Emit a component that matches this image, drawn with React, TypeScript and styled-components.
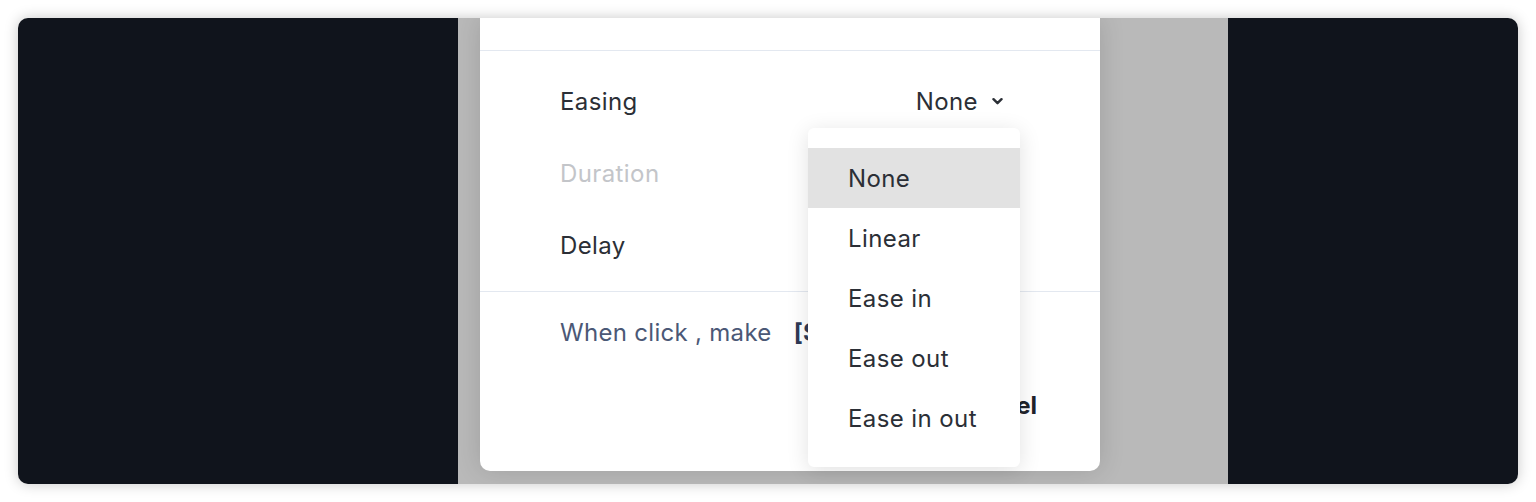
import React from "react";
import styled, { createGlobalStyle } from "styled-components";

// Opções do menu de easing
const easingOptions = ["None", "Linear", "Ease in", "Ease out", "Ease in out"];

interface SettingRow {
  label: string;
  disabled?: boolean;
}

const rows: SettingRow[] = [
  { label: "Easing" },
  { label: "Duration", disabled: true },
  { label: "Delay" },
];

const Chevron: React.FC = () => (
  <svg width="11" height="8" viewBox="0 0 11 8" fill="none">
    <path
      d="M1.5 2.2 L5.5 6.2 L9.5 2.2"
      stroke="#2b2f36"
      strokeWidth="2.4"
      strokeLinecap="round"
      strokeLinejoin="round"
    />
  </svg>
);

const App: React.FC = () => {
  const selected = "None";

  return (
    <>
      <GlobalStyle />
      <Frame>
        <Stage>
          <Modal>
            <Header />

            <Settings>
              {rows.map((row) => (
                <Row key={row.label}>
                  <Label disabled={row.disabled}>{row.label}</Label>
                  {row.label === "Easing" && (
                    <ValueWrap>
                      <Value>
                        {selected}
                        <Chevron />
                      </Value>
                      <Menu>
                        {easingOptions.map((opt) => (
                          <MenuItem key={opt} active={opt === selected}>
                            {opt}
                          </MenuItem>
                        ))}
                      </Menu>
                    </ValueWrap>
                  )}
                </Row>
              ))}
            </Settings>

            <Sentence>
              When click , make <strong>[Select]</strong>
            </Sentence>

            <Footer>
              <CancelButton>Cancel</CancelButton>
            </Footer>
          </Modal>
        </Stage>
      </Frame>
    </>
  );
};

const GlobalStyle = createGlobalStyle`
  html, body {
    margin: 0;
    padding: 0;
    background: #ffffff;
  }
  body {
    font-family: Inter, "Liberation Sans", sans-serif;
    -webkit-font-smoothing: antialiased;
  }
`;

// Moldura escura com cantos arredondados
const Frame = styled.div`
  margin: 18px;
  height: 466px;
  background: #10141c;
  border-radius: 10px;
  box-shadow: 0 0 14px rgba(0, 0, 0, 0.22);
  overflow: hidden;
  display: grid;
  grid-template-columns: 440px 770px 1fr;
`;

// Faixa cinza (overlay) atrás do modal
const Stage = styled.div`
  grid-column: 2;
  background: #b9b9b9;
  display: flex;
  align-items: stretch;
  padding: 0 0 13px 22px;
`;

const Modal = styled.div`
  width: 620px;
  background: #ffffff;
  border-radius: 0 0 10px 10px;
  box-shadow: 0 0 26px rgba(0, 0, 0, 0.14);
  display: flex;
  flex-direction: column;
`;

// Cabeçalho cortado pelo topo da tela
const Header = styled.div`
  height: 32px;
  flex-shrink: 0;
  border-bottom: 1px solid #e3e8f0;
`;

const Settings = styled.div`
  padding: 14px 97px 10px 80px;
  border-bottom: 1px solid #e3e8f0;
`;

const Row = styled.div`
  height: 72px;
  display: flex;
  align-items: center;
  justify-content: space-between;
`;

const Label = styled.span<{ disabled?: boolean }>`
  font-size: 24px;
  letter-spacing: 0.4px;
  color: ${({ disabled }) => (disabled ? "#c3c5c9" : "#2b2f36")};
`;

const ValueWrap = styled.div`
  position: relative;
  align-self: stretch;
  display: flex;
  align-items: center;
`;

const Value = styled.span`
  display: flex;
  align-items: center;
  gap: 14px;
  font-size: 24px;
  letter-spacing: 0.4px;
  color: #2b2f36;
`;

// Menu suspenso aberto sobre o modal
const Menu = styled.div`
  position: absolute;
  top: 63px;
  right: -17px;
  width: 212px;
  padding: 20px 0 19px;
  background: #ffffff;
  border-radius: 6px;
  box-shadow: 0 4px 22px rgba(0, 0, 0, 0.12);
  z-index: 10;
`;

const MenuItem = styled.div<{ active?: boolean }>`
  height: 60px;
  display: flex;
  align-items: center;
  padding-left: 40px;
  font-size: 24px;
  letter-spacing: 0.4px;
  color: #2b2f36;
  background: ${({ active }) => (active ? "#e2e2e2" : "transparent")};
`;

const Sentence = styled.div`
  padding: 26px 80px 0;
  height: 54px;
  box-sizing: border-box;
  font-size: 24px;
  letter-spacing: 0.3px;
  color: #4b5876;

  strong {
    margin-left: 15px;
    color: #2f3a55;
  }
`;

const Footer = styled.div`
  flex: 1;
  display: flex;
  justify-content: flex-end;
  align-items: flex-start;
  padding: 45px 63px 0;
`;

const CancelButton = styled.button`
  border: none;
  background: none;
  padding: 0;
  font-family: inherit;
  font-size: 24px;
  font-weight: 700;
  color: #1f232b;
  line-height: 30px;
`;

export default App;
